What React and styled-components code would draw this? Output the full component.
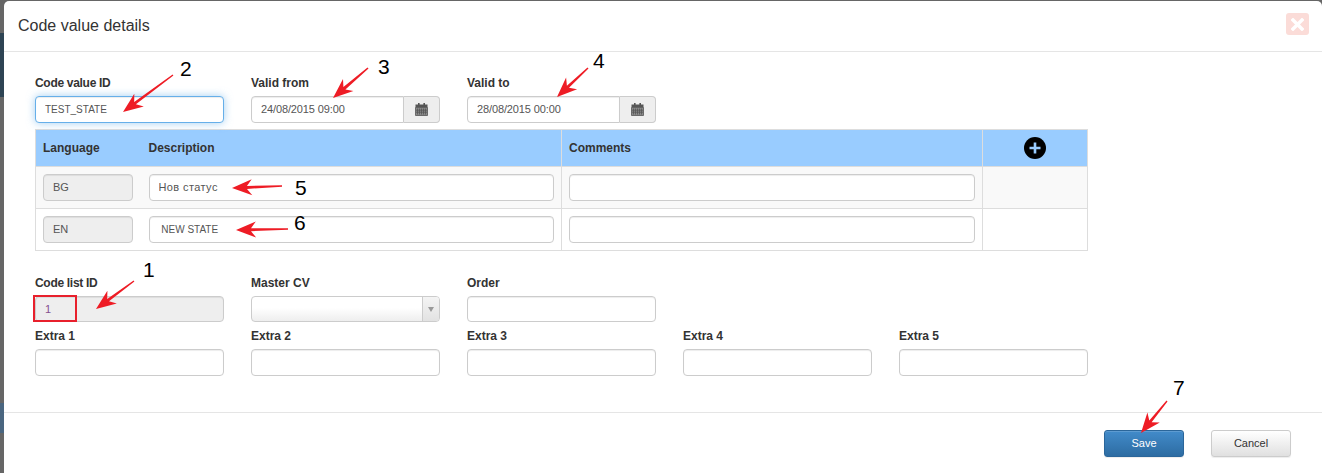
import styled, { createGlobalStyle } from 'styled-components';

const GlobalStyle = createGlobalStyle`
  html, body {
    margin: 0;
    padding: 0;
    background: #666;
  }
  * {
    box-sizing: border-box;
  }
`;

const Page = styled.div`
  position: relative;
  display: flex;
  width: 1322px;
  height: 473px;
  overflow: hidden;
  padding-top: 1px;
  background: #666;
  font-family: "Liberation Sans", Arial, sans-serif;
  color: #333;
`;

const Backdrop = styled.div`
  position: absolute;
  left: 0;
  top: 0;
  width: 4px;
  height: 473px;
  display: flex;
  flex-direction: column;
`;

const BackdropBand = styled.div`
  height: ${(props) => props.$height}px;
  background: ${(props) => props.$color};
`;

const Modal = styled.div`
  position: relative;
  margin-left: 4px;
  flex: 1;
  background: #fff;
  border-radius: 5px 5px 0 0;
  display: flex;
  flex-direction: column;
`;

const Header = styled.div`
  height: 51px;
  border-bottom: 1px solid #e5e5e5;
  display: flex;
  align-items: center;
  justify-content: space-between;
  padding: 0 13px 0 14px;
`;

const Title = styled.h4`
  margin: 0;
  font-size: 16px;
  font-weight: 400;
  color: #333;
`;

const CloseButton = styled.div`
  width: 23px;
  height: 22px;
  border-radius: 3px;
  background: #fbdcd8;
  display: flex;
  align-items: center;
  justify-content: center;
  margin-bottom: 4px;
`;

const Body = styled.div`
  padding: 24px 0 36px 31px;
  border-bottom: 1px solid #e5e5e5;
`;

const FieldRow = styled.div`
  display: grid;
  grid-template-columns: repeat(5, 189px);
  column-gap: 27px;
  margin-top: ${(props) => props.$top || 0}px;
`;

const Field = styled.div`
  display: flex;
  flex-direction: column;
`;

const Label = styled.label`
  display: block;
  height: 14px;
  line-height: 14px;
  margin-bottom: 6px;
  font-size: 12px;
  font-weight: 700;
  letter-spacing: ${(props) => props.$spacing || 0}px;
  color: #333;
`;

const TextInput = styled.input`
  display: block;
  width: 100%;
  height: ${(props) => props.$height || 27}px;
  padding: 0 9px ${(props) => (props.$height || props.$size ? 0 : 2)}px;
  font-family: inherit;
  font-size: ${(props) => props.$size || 11}px;
  letter-spacing: ${(props) => props.$spacing || 0}px;
  color: ${(props) => props.$color || '#555'};
  background: ${(props) => (props.$disabled ? '#eee' : '#fff')};
  border: 1px solid ${(props) => (props.$focused ? '#66afe9' : '#ccc')};
  border-radius: 4px;
  outline: none;
  box-shadow: ${(props) =>
    props.$focused
      ? 'inset 0 1px 1px rgba(0,0,0,.075), 0 0 8px rgba(102,175,233,.6)'
      : 'inset 0 1px 1px rgba(0,0,0,.075)'};
`;

const InputGroup = styled.div`
  display: flex;
  height: 27px;
`;

const GroupInput = styled(TextInput)`
  flex: 1;
  min-width: 0;
  border-radius: 4px 0 0 4px;
`;

const AddOn = styled.div`
  width: 36px;
  background: #eee;
  border: 1px solid #ccc;
  border-left: 0;
  border-radius: 0 4px 4px 0;
  display: flex;
  align-items: center;
  justify-content: center;
`;

const Select = styled.div`
  height: 26px;
  display: flex;
  justify-content: flex-end;
  border: 1px solid #ccc;
  border-radius: 4px;
  background: linear-gradient(to bottom, #fff 45%, #eee 100%);
`;

const SelectArrow = styled.div`
  width: 17px;
  border-left: 1px solid #ccc;
  display: flex;
  align-items: center;
  justify-content: center;
  background: linear-gradient(to bottom, #f4f4f4, #e2e2e2);
  border-radius: 0 3px 3px 0;
  &::after {
    content: '';
    border-left: 3px solid transparent;
    border-right: 3px solid transparent;
    border-top: 5px solid #999;
  }
`;

const Table = styled.table`
  width: 1052px;
  margin-top: 6px;
  table-layout: fixed;
  border-collapse: collapse;
  border: 1px solid #ddd;
`;

const HeadCell = styled.th`
  width: ${(props) => props.$width}px;
  height: 37px;
  padding: 0 7px;
  background: #99ccff;
  border-left: ${(props) => (props.$divider ? '1px solid #ddd' : '0')};
  border-bottom: 1px solid #ddd;
  font-size: 12px;
  font-weight: 700;
  text-align: ${(props) => (props.$center ? 'center' : 'left')};
  color: #333;
  vertical-align: middle;
`;

const PlusCell = styled(HeadCell)`
  padding: 0;
  line-height: 0;
`;

const Row = styled.tr`
  height: 42px;
  background: ${(props) => (props.$striped ? '#f9f9f9' : '#fff')};
`;

const Cell = styled.td`
  padding: 0 7px;
  border-top: 1px solid #ddd;
  border-left: ${(props) => (props.$divider ? '1px solid #ddd' : '0')};
  vertical-align: middle;
`;

const LanguageInput = styled(TextInput)`
  width: 90px;
`;

const Footer = styled.div`
  padding: 17px 31px 0 0;
  display: flex;
  justify-content: flex-end;
  gap: 27px;
`;

const Button = styled.button`
  width: 80px;
  height: 27px;
  padding: 0 0 2px;
  font-family: inherit;
  font-size: 11px;
  border-radius: 3px;
  color: ${(props) => (props.$primary ? '#fff' : '#333')};
  border: 1px solid ${(props) => (props.$primary ? '#2b669a' : '#ccc')};
  background: ${(props) =>
    props.$primary
      ? 'linear-gradient(to bottom, #428bca, #2d6ca2)'
      : 'linear-gradient(to bottom, #fff, #e0e0e0)'};
  box-shadow: inset 0 1px 0 rgba(255,255,255,.15), 0 1px 1px rgba(0,0,0,.075);
`;

const Markup = styled.svg`
  position: absolute;
  left: 0;
  top: 0;
  pointer-events: none;
`;

const Number = styled.span`
  position: absolute;
  left: ${(props) => props.$x}px;
  top: ${(props) => props.$y}px;
  font-size: 21px;
  line-height: 24px;
  color: #000;
`;

const RedBox = styled.div`
  position: absolute;
  left: 33px;
  top: 295px;
  width: 44px;
  height: 27px;
  border: 2px solid #e8202c;
`;

const CalendarIcon = () => (
  <svg width="13" height="13" viewBox="0 0 13 13">
    <rect x="3" y="0" width="1.6" height="3" fill="#555" />
    <rect x="8.4" y="0" width="1.6" height="3" fill="#555" />
    <rect x="0.5" y="1.5" width="12" height="3" fill="#555" />
    <path
      d="M0.5 4.5h12v8h-12zM2.5 5.5v6M4.5 5.5v6M6.5 5.5v6M8.5 5.5v6M10.5 5.5v6M1 7.2h11M1 9.2h11"
      fill="#8a8a8a"
      stroke="#555"
      strokeWidth="0.8"
    />
  </svg>
);

const DateField = ({ label, value }) => (
  <Field>
    <Label>{label}</Label>
    <InputGroup>
      <GroupInput value={value} readOnly $spacing={-0.12} />
      <AddOn><CalendarIcon /></AddOn>
    </InputGroup>
  </Field>
);

const PlainField = ({ label }) => (
  <Field>
    <Label>{label}</Label>
    <TextInput readOnly />
  </Field>
);

// arrow from tail to tip: thin tapered shaft, barbed head
const arrowPoints = ([tx, ty], [x, y]) => {
  const len = Math.hypot(x - tx, y - ty);
  const ux = (x - tx) / len;
  const uy = (y - ty) / len;
  const at = (along, side) =>
    `${(x - ux * along - uy * side).toFixed(1)},${(y - uy * along + ux * side).toFixed(1)}`;
  return [
    at(0, 0),
    at(20, 8),
    at(15, 1.5),
    at(len, 0.7),
    at(len, -0.7),
    at(15, -1.5),
    at(20, -8),
  ].join(' ');
};

const arrows = [
  [[173, 75], [123, 112]],
  [[368, 68], [333, 98]],
  [[588, 68], [557, 97]],
  [[282, 186], [232, 188]],
  [[288, 229], [236, 230]],
  [[134, 281], [96, 309]],
  [[1167, 401], [1141, 433]],
];

const numbers = [
  ['2', 180, 57],
  ['3', 378, 55],
  ['4', 593, 49],
  ['5', 295, 176],
  ['6', 294, 211],
  ['1', 143, 258],
  ['7', 1173, 376],
];

const bands = [
  [33, '#666'],
  [64, '#2e4454'],
  [306, '#666'],
  [30, '#4a6680'],
  [40, '#666'],
];

const App = () => (
  <Page>
    <GlobalStyle />
    <Backdrop>
      {bands.map(([height, color], index) => (
        <BackdropBand key={index} $height={height} $color={color} />
      ))}
    </Backdrop>
    <Modal>
      <Header>
        <Title>Code value details</Title>
        <CloseButton>
          <svg width="13" height="13" viewBox="0 0 13 13">
            <path d="M2 2l9 9M11 2l-9 9" stroke="#fff" strokeWidth="3.4" strokeLinecap="square" />
          </svg>
        </CloseButton>
      </Header>
      <Body>
        <FieldRow>
          <Field>
            <Label $spacing={-0.3}>Code value ID</Label>
            <TextInput value="TEST_STATE" readOnly $focused $size={10} />
          </Field>
          <DateField label="Valid from" value="24/08/2015 09:00" />
          <DateField label="Valid to" value="28/08/2015 00:00" />
        </FieldRow>
        <Table>
          <thead>
            <tr>
              <HeadCell $width={106}>Language</HeadCell>
              <HeadCell $width={420}>Description</HeadCell>
              <HeadCell $width={421} $divider>Comments</HeadCell>
              <PlusCell $width={105} $divider $center>
                <svg width="22" height="22" viewBox="0 0 22 22">
                  <circle cx="11" cy="11" r="11" fill="#000" />
                  <path d="M11 5.5v11M5.5 11h11" stroke="#99ccff" strokeWidth="2.6" />
                </svg>
              </PlusCell>
            </tr>
          </thead>
          <tbody>
            <Row $striped>
              <Cell><LanguageInput value="BG" readOnly $disabled /></Cell>
              <Cell><TextInput value="Нов статус" readOnly $spacing={0.4} /></Cell>
              <Cell $divider><TextInput readOnly /></Cell>
              <Cell $divider />
            </Row>
            <Row>
              <Cell><LanguageInput value="EN" readOnly $disabled /></Cell>
              <Cell><TextInput value=" NEW STATE" readOnly $size={10} /></Cell>
              <Cell $divider><TextInput readOnly /></Cell>
              <Cell $divider />
            </Row>
          </tbody>
        </Table>
        <FieldRow $top={25}>
          <Field>
            <Label $spacing={-0.3}>Code list ID</Label>
            <TextInput value="1" readOnly $disabled $height={26} $color="#84508f" />
          </Field>
          <Field>
            <Label>Master CV</Label>
            <Select><SelectArrow /></Select>
          </Field>
          <Field>
            <Label>Order</Label>
            <TextInput readOnly $height={26} />
          </Field>
        </FieldRow>
        <FieldRow $top={7}>
          <PlainField label="Extra 1" />
          <PlainField label="Extra 2" />
          <PlainField label="Extra 3" />
          <PlainField label="Extra 4" />
          <PlainField label="Extra 5" />
        </FieldRow>
      </Body>
      <Footer>
        <Button $primary>Save</Button>
        <Button>Cancel</Button>
      </Footer>
    </Modal>
    <RedBox />
    <Markup width="1322" height="473" viewBox="0 0 1322 473">
      {arrows.map(([tail, tip], index) => (
        <polygon key={index} points={arrowPoints(tail, tip)} fill="#ee1c25" />
      ))}
    </Markup>
    {numbers.map(([text, x, y]) => (
      <Number key={text} $x={x} $y={y}>{text}</Number>
    ))}
  </Page>
);

export default App;
